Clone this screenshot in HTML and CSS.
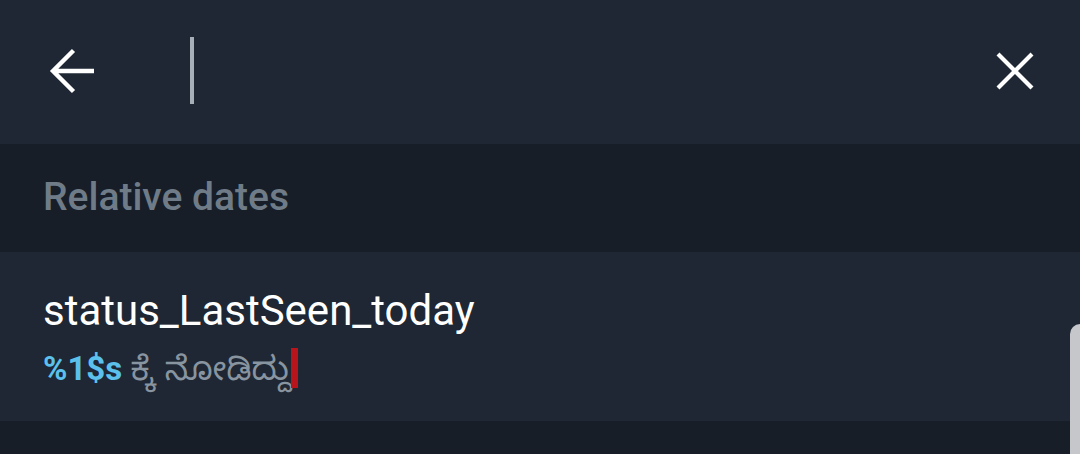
FILE: index.html
```html
<!DOCTYPE html>
<html>
<head>
<meta charset="utf-8">
<link rel="stylesheet" href="styles.css">
</head>
<body>
<div class="app">
  <header class="topbar">
    <button class="icon-btn back" aria-label="Back">
      <svg width="48" height="48" viewBox="0 0 48 48"><path d="M45 24H4M24.5 3.5L4 24l20.5 20.5" fill="none" stroke="#fff" stroke-width="4.4" stroke-linecap="butt" stroke-linejoin="miter"/></svg>
    </button>
    <div class="search"><span class="caret"></span></div>
    <button class="icon-btn close" aria-label="Close">
      <svg width="40" height="40" viewBox="0 0 40 40"><path d="M3 3L37 37M37 3L3 37" fill="none" stroke="#fff" stroke-width="4.2"/></svg>
    </button>
  </header>
  <div class="section-header">Relative dates</div>
  <div class="item">
    <div class="item-title">status_LastSeen_today</div>
    <div class="item-sub"><span class="ph">%1$s </span><span class="kn">ಕ್ಕೆ ನೋಡಿದ್ದು</span><span class="red-caret"></span></div>
  </div>
  <div class="rest"></div>
  <div class="scroll-thumb"></div>
</div>
</body>
</html>
```

FILE: styles.css
```css
html, body {
  margin: 0;
  padding: 0;
  background: #171e28;
}
body {
  font-family: Roboto, "Noto Sans", sans-serif;
  width: 1080px;
  height: 454px;
  overflow: hidden;
}
.app {
  position: relative;
  display: flex;
  flex-direction: column;
  height: 454px;
}
.topbar {
  height: 144px;
  flex: none;
  background: #1e2733;
  display: flex;
  align-items: center;
}
.icon-btn {
  background: none;
  border: 0;
  padding: 0;
  display: flex;
  align-items: center;
  justify-content: center;
}
.back {
  width: 48px;
  height: 48px;
  margin-left: 49px;
  margin-top: -3px;
}
.search {
  flex: 1;
  height: 144px;
  display: flex;
  align-items: center;
  padding-left: 93px;
}
.caret {
  display: block;
  width: 4px;
  height: 67px;
  background: #a6aeb7;
  margin-top: -3px;
}
.close {
  width: 40px;
  height: 40px;
  margin-right: 45px;
  margin-top: -2px;
}
.section-header {
  height: 108px;
  flex: none;
  box-sizing: border-box;
  padding: 33px 0 0 43px;
  font-size: 39px;
  font-weight: 500;
  color: #6f7c88;
  background: #171e28;
  line-height: 40px;
}
.item {
  height: 169px;
  flex: none;
  background: #1e2733;
  box-sizing: border-box;
  padding: 34px 0 0 43px;
}
.item-title {
  font-size: 42px;
  color: #ffffff;
  line-height: 50px;
  height: 50px;
}
.item-sub {
  font-size: 33px;
  line-height: 44px;
  height: 44px;
  margin-top: 11px;
  white-space: pre;
}
.ph {
  color: #5bc1ec;
  font-weight: 700;
}
.kn {
  color: #8894a0;
  font-family: "Noto Sans Kannada", "Noto Sans", sans-serif;
}
.red-caret {
  display: inline-block;
  width: 7px;
  height: 40px;
  background: #b8141c;
  vertical-align: -8px;
}
.rest {
  flex: 1;
  background: #171e28;
}
.scroll-thumb {
  position: absolute;
  right: 0;
  top: 324px;
  width: 10px;
  bottom: 0;
  background: #c6c7ca;
  border-top-left-radius: 10px;
}
```
